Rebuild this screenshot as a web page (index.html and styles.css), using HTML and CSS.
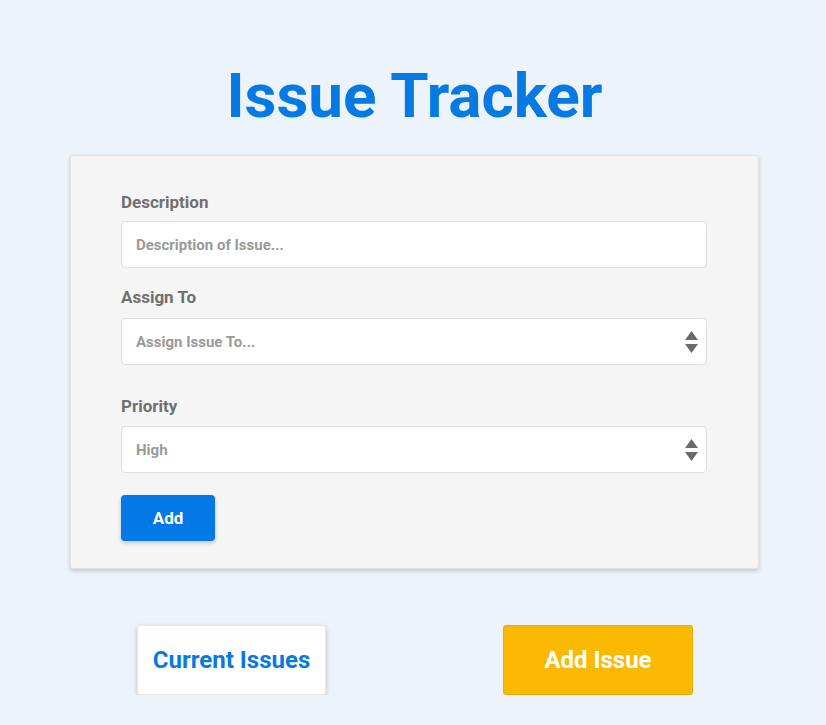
FILE: index.html
```html
<!DOCTYPE html>
<html lang="en">
<head>
<meta charset="utf-8">
<title>Issue Tracker</title>
<link rel="stylesheet" href="styles.css">
</head>
<body>
  <h1 class="title">Issue Tracker</h1>
  <div class="card">
    <label class="label">Description</label>
    <div class="field field-desc">Description of Issue...</div>
    <label class="label label-assign">Assign To</label>
    <div class="field field-select field-assign">
      <span>Assign Issue To...</span>
      <svg class="arrows" width="13" height="22" viewBox="0 0 13 22"><path d="M6.5 0 L13 9 L0 9 Z" fill="#6b6b6b"/><path d="M0 13 L13 13 L6.5 22 Z" fill="#6b6b6b"/></svg>
    </div>
    <label class="label label-priority">Priority</label>
    <div class="field field-select field-priority">
      <span>High</span>
      <svg class="arrows" width="13" height="22" viewBox="0 0 13 22"><path d="M6.5 0 L13 9 L0 9 Z" fill="#6b6b6b"/><path d="M0 13 L13 13 L6.5 22 Z" fill="#6b6b6b"/></svg>
    </div>
    <button class="btn-add">Add</button>
  </div>
  <div class="actions">
    <button class="btn-big btn-current">Current Issues</button>
    <button class="btn-big btn-new">Add Issue</button>
  </div>
</body>
</html>
```

FILE: styles.css
```css
* { box-sizing: border-box; }
body {
  margin: 0;
  background: #ecf3fb;
  font-family: Roboto, "Liberation Sans", sans-serif;
}
.title {
  margin: 59px 0 23px;
  padding-left: 3px;
  text-align: center;
  font-size: 62px;
  line-height: 73px;
  font-weight: 700;
  color: #0679e3;
}
.card {
  width: 689px;
  margin: 0 0 0 70px;
  background: #f5f5f5;
  border: 1px solid #e2e2e2;
  border-radius: 3px;
  box-shadow: 0 2px 4px rgba(0,0,0,0.18);
  padding: 36px 51px 27px 50px;
  display: flex;
  flex-direction: column;
  align-items: flex-start;
}
.label {
  display: block;
  font-size: 17px;
  line-height: 20px;
  font-weight: 700;
  color: #707070;
  margin-bottom: 9px;
}
.label-assign { margin-bottom: 11px; }
.label-priority { margin-bottom: 10px; }
.field {
  width: 100%;
  height: 47px;
  background: #fff;
  border: 1px solid #dedede;
  border-radius: 4px;
  padding: 0 8px 0 14px;
  font-size: 15px;
  font-weight: 700;
  color: #9a9a9a;
  display: flex;
  align-items: center;
}
.field-desc { margin-bottom: 19px; }
.field-select { justify-content: space-between; }
.field-assign { margin-bottom: 31px; }
.field-priority { margin-bottom: 22px; }
.arrows { display: block; }
.btn-add {
  width: 94px;
  height: 46px;
  border: none;
  border-radius: 4px;
  background: #0279e6;
  color: #fff;
  font-family: inherit;
  font-size: 17px;
  font-weight: 700;
  box-shadow: 0 2px 4px rgba(0,0,0,0.2);
}
.actions {
  width: 689px;
  margin: 56px 0 0 70px;
  padding: 0 66px 0 67px;
  display: flex;
  justify-content: space-between;
}
.btn-big {
  width: 190px;
  height: 70px;
  border-radius: 3px;
  font-family: inherit;
  font-size: 24px;
  font-weight: 700;
}
.btn-current {
  width: 189px;
  background: #fff;
  color: #0679e3;
  border: 1px solid #e6e6e6;
  box-shadow: 0 2px 5px rgba(0,0,0,0.2);
}
.btn-new {
  background: #fbb901;
  color: #fff;
  border: 1px solid #e9ad00;
}
```
